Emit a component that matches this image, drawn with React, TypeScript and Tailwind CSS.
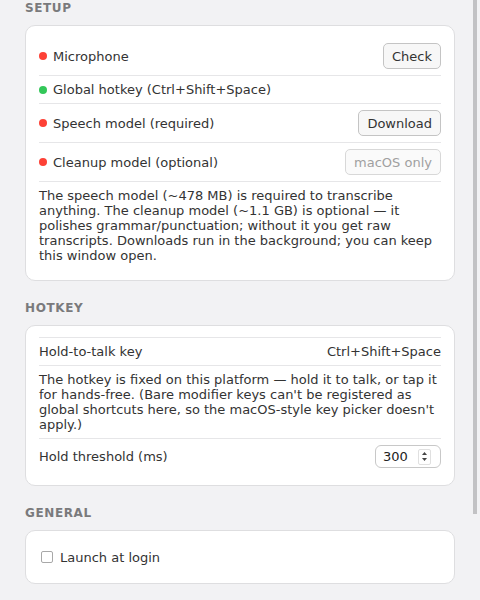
import React from 'react';

type Status = 'ok' | 'missing';

interface CheckRow {
  label: string;
  status: Status;
  action?: string;
  disabled?: boolean;
}

const setupRows: CheckRow[] = [
  { label: 'Microphone', status: 'missing', action: 'Check' },
  { label: 'Global hotkey (Ctrl+Shift+Space)', status: 'ok' },
  { label: 'Speech model (required)', status: 'missing', action: 'Download' },
  { label: 'Cleanup model (optional)', status: 'missing', action: 'macOS only', disabled: true },
];

function SectionTitle({ children }: { children: React.ReactNode }) {
  return (
    <h2 className="text-[12px] leading-[15px] font-bold tracking-wider uppercase text-[#7a7a7c] mb-[9px]">
      {children}
    </h2>
  );
}

function Card({ children }: { children: React.ReactNode }) {
  return (
    <div className="bg-white border border-[#dedee0] rounded-[10px] px-[13px] py-[11px]">
      {children}
    </div>
  );
}

function SmallButton({ label, disabled }: { label: string; disabled?: boolean }) {
  return (
    <button
      disabled={disabled}
      className={
        disabled
          ? 'h-[26px] px-2 rounded-[5px] border border-[#d8d8d8] bg-[#fafafa] text-[#a0a0a0] text-[13px] leading-[15px]'
          : 'h-[26px] px-2 rounded-[5px] border border-[#c4c4c4] bg-[#f7f7f7] text-[#333333] text-[13px] leading-[15px]'
      }
    >
      {label}
    </button>
  );
}

function Stepper() {
  return (
    <div className="flex items-center h-[23px] w-[66px] rounded-[6px] border border-[#c8c8c8] bg-white pl-[7px] pr-[9px]">
      <span className="flex-1 text-[13px] leading-[15px] text-[#222]">300</span>
      <span className="flex flex-col items-center justify-center gap-[3px] w-[13px] h-[16px] border border-[#e0e0e0] rounded-[2px]">
        <svg width="5" height="3" viewBox="0 0 5 3"><path d="M2.5 0L5 3H0z" fill="#444" /></svg>
        <svg width="5" height="3" viewBox="0 0 5 3"><path d="M0 0H5L2.5 3z" fill="#444" /></svg>
      </span>
    </div>
  );
}

export default function App() {
  return (
    <div
      className="relative h-[600px] overflow-hidden bg-[#f2f2f4] text-[#333333] text-[13px] leading-[15px]"
      style={{ fontFamily: '"DejaVu Sans", Verdana, sans-serif' }}
    >
      {/* fake overlay scrollbar */}
      <div className="absolute right-[3px] top-0 w-[4px] h-[514px] bg-[#c2c2c4]" />

      <div className="pt-[1px] pl-[25px] pr-[25px] flex flex-col gap-5">
        {/* Setup */}
        <section>
          <SectionTitle>Setup</SectionTitle>
          <Card>
            {setupRows.map((row, i) => (
              <div
                key={row.label}
                className={`flex items-center justify-between py-[6px] ${i > 0 ? 'border-t border-[#e6e6e8]' : ''}`}
              >
                <div className="flex items-center gap-1.5 min-h-[15px]">
                  <span
                    className={`w-2 h-2 rounded-full ${row.status === 'ok' ? 'bg-[#33c759]' : 'bg-[#fd4136]'}`}
                  />
                  <span>{row.label}</span>
                </div>
                {row.action && <SmallButton label={row.action} disabled={row.disabled} />}
              </div>
            ))}
            <p className="border-t border-[#e6e6e8] pt-[6px] pb-[6px]">
              The speech model (~478 MB) is required to transcribe anything. The cleanup model (~1.1 GB) is
              optional — it polishes grammar/punctuation; without it you get raw transcripts. Downloads run
              in the background; you can keep this window open.
            </p>
          </Card>
        </section>

        {/* Hotkey */}
        <section>
          <SectionTitle>Hotkey</SectionTitle>
          <Card>
            <div className="flex items-center justify-between border-t border-[#e6e6e8] py-[6px]">
              <span>Hold-to-talk key</span>
              <span>Ctrl+Shift+Space</span>
            </div>
            <p className="border-t border-[#e6e6e8] py-[6px]">
              The hotkey is fixed on this platform — hold it to talk, or tap it for hands-free. (Bare
              modifier keys can't be registered as global shortcuts here, so the macOS-style key picker
              doesn't apply.)
            </p>
            <div className="flex items-center justify-between border-t border-[#e6e6e8] py-[6px]">
              <span>Hold threshold (ms)</span>
              <Stepper />
            </div>
          </Card>
        </section>

        {/* General */}
        <section>
          <SectionTitle>General</SectionTitle>
          <Card>
            <div className="flex items-center gap-[7px] py-[6px] min-h-[30px]">
              <span className="ml-[2px] w-[12px] h-[12px] rounded-[2px] border border-[#a8a8a8] bg-white" />
              <span>Launch at login</span>
            </div>
          </Card>
        </section>
      </div>
    </div>
  );
}
